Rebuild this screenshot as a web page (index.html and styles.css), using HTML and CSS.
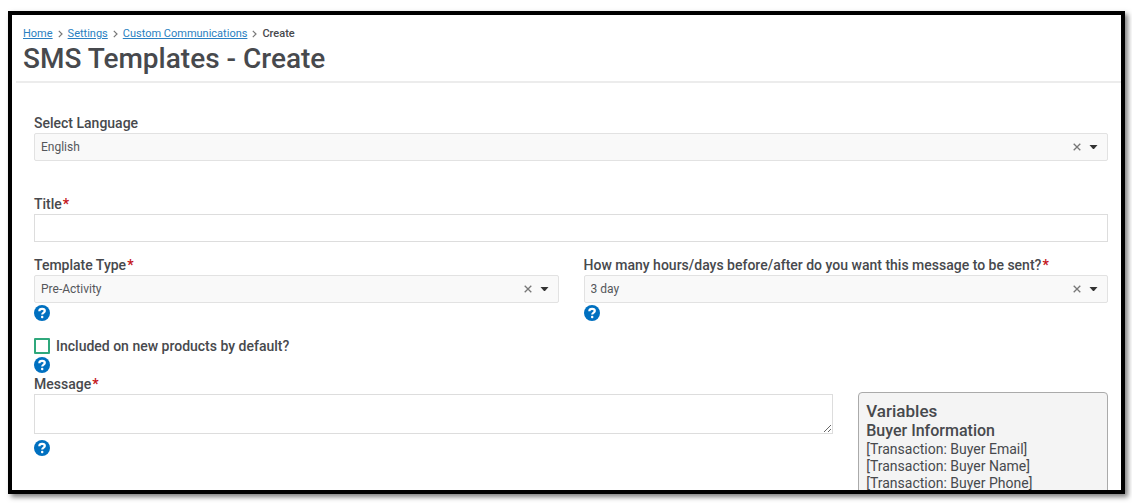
FILE: index.html
```
<!DOCTYPE html>
<html lang="en">
<head>
    <meta charset="UTF-8">
    <meta name="viewport" content="width=device-width, initial-scale=1.0">
    <title>SMS Templates - Create</title>
    <link rel="stylesheet" href="styles.css">
</head>
<body>
    <svg class="defs" aria-hidden="true">
        <symbol id="icon-help" viewBox="0 0 16 16">
            <circle cx="8" cy="8" r="8" fill="#0070c0"/>
            <path d="M5.300 6.200C5.400 4.600 6.500 3.900 8.100 3.900c1.600 0 2.700.8 2.700 2.100C10.800 7.600 8.200 7.600 8.200 9.600" fill="none" stroke="#fff" stroke-width="2.200"/>
            <rect x="7" y="10.800" width="2.400" height="2.400" rx="1" fill="#fff"/>
        </symbol>
        <symbol id="icon-clear" viewBox="0 0 8 8">
            <path d="M0.700 0.700L7.300 7.300M7.300 0.700L0.700 7.300" stroke="#777" stroke-width="1.300"/>
        </symbol>
        <symbol id="icon-caret" viewBox="0 0 8 4">
            <path d="M0 0H8L4.500 4H3.500Z" fill="#333"/>
        </symbol>
        <symbol id="icon-next" viewBox="0 0 5 8">
            <path d="M0.800 0.800L4 4L0.800 7.200" fill="none" stroke="#777" stroke-width="1.200"/>
        </symbol>
    </svg>
    <div class="frame">
        <header class="header">
            <nav class="breadcrumb" aria-label="Breadcrumb">
                <a href="#">Home</a>
                <svg><use href="#icon-next"/></svg>
                <a href="#">Settings</a>
                <svg><use href="#icon-next"/></svg>
                <a href="#">Custom Communications</a>
                <svg><use href="#icon-next"/></svg>
                <span class="current">Create</span>
            </nav>
            <h1>SMS Templates - Create</h1>
        </header>
        <form class="form">
            <div class="field language">
                <label for="language">Select Language</label>
                <div class="select">
                    <select id="language"><option>English</option></select>
                    <button type="button" class="clear" aria-label="Clear"><svg><use href="#icon-clear"/></svg></button>
                    <svg class="caret"><use href="#icon-caret"/></svg>
                </div>
            </div>
            <div class="field title">
                <label for="title">Title<span class="req">*</span></label>
                <input type="text" id="title" required>
            </div>
            <div class="row">
                <div class="field">
                    <label for="type">Template Type<span class="req">*</span></label>
                    <div class="select">
                        <select id="type"><option>Pre-Activity</option></select>
                        <button type="button" class="clear" aria-label="Clear"><svg><use href="#icon-clear"/></svg></button>
                        <svg class="caret"><use href="#icon-caret"/></svg>
                    </div>
                    <button type="button" class="help" aria-label="Help"><svg><use href="#icon-help"/></svg></button>
                </div>
                <div class="field">
                    <label for="when">How many hours/days before/after do you want this message to be sent?<span class="req">*</span></label>
                    <div class="select">
                        <select id="when"><option>3 day</option></select>
                        <button type="button" class="clear" aria-label="Clear"><svg><use href="#icon-clear"/></svg></button>
                        <svg class="caret"><use href="#icon-caret"/></svg>
                    </div>
                    <button type="button" class="help" aria-label="Help"><svg><use href="#icon-help"/></svg></button>
                </div>
            </div>
            <div class="check">
                <input type="checkbox" id="included">
                <label for="included">Included on new products by default?</label>
            </div>
            <button type="button" class="help" aria-label="Help"><svg><use href="#icon-help"/></svg></button>
            <div class="bottom">
                <div class="field message">
                    <label for="message">Message<span class="req">*</span></label>
                    <textarea id="message" required></textarea>
                    <button type="button" class="help" aria-label="Help"><svg><use href="#icon-help"/></svg></button>
                </div>
                <aside class="variables">
                    <h2>Variables</h2>
                    <h3>Buyer Information</h3>
                    <ul>
                        <li>[Transaction: Buyer Email]</li>
                        <li>[Transaction: Buyer Name]</li>
                        <li>[Transaction: Buyer Phone]</li>
                    </ul>
                </aside>
            </div>
        </form>
    </div>
</body>
</html>
```
FILE: styles.css
```
*{margin: 0; padding: 0; box-sizing: border-box;}
body{
    height: 100vh;
    padding: 11px 7px 9px 8px;
    overflow: hidden;
    background-color: #fff;
    color: #47494d;
    font-family: Roboto, "Liberation Sans", sans-serif;
    font-size: 14px;
}
li{list-style: none;}
button{
    border: none;
    background: none;
    cursor: pointer;
}
svg{display: block;}
.defs{
    position: absolute;
    width: 0;
    height: 0;
}
.frame{
    height: 100%;
    border: 4px solid #000;
    overflow: hidden;
    box-shadow: 3px 3px 5px rgba(0, 0, 0, 0.5);
}

/* header */
.header{
    margin-left: 4px;
    padding: 11px 7px 5px;
    border-bottom: 2px solid #ececec;
}
.breadcrumb{
    display: flex;
    align-items: center;
    gap: 5px;
    font-size: 11px;
    line-height: 16px;
}
.breadcrumb a{color: #2a7fc1;}
.breadcrumb svg{
    width: 5px;
    height: 8px;
}
.breadcrumb .current{font-weight: 500;}
h1{
    font-size: 28px;
    line-height: 34px;
    font-weight: 500;
}

/* form */
.form{padding: 31px 13px 0 22px;}
.field label{
    display: block;
    line-height: 18px;
    margin-bottom: 1px;
    font-weight: 500;
}
.req{
    margin-left: 1px;
    color: #c4161c;
    font-weight: 700;
}
.language{margin-bottom: 34px;}
.title{margin-bottom: 14px;}
.select{position: relative;}
select, input[type="text"], textarea{
    display: block;
    width: 100%;
    height: 28px;
    border: 1px solid #ddd;
    background-color: #fff;
    color: #55575b;
    font-family: inherit;
    font-size: 12px;
}
select{
    padding: 0 48px 0 6px;
    appearance: none;
    border-color: #e2e2e2;
    border-radius: 2px;
    background-color: #f9f9f9;
}
.clear{
    position: absolute;
    top: 10px;
    right: 27px;
}
.clear svg{
    width: 8px;
    height: 8px;
}
.caret{
    position: absolute;
    top: 12px;
    right: 10px;
    width: 9px;
    height: 4px;
    pointer-events: none;
}
.row{
    display: grid;
    grid-template-columns: 1fr 1fr;
    gap: 25px;
}
.help{
    display: block;
    margin-top: 2px;
}
.help svg{
    width: 16px;
    height: 16px;
}
.check{
    display: flex;
    align-items: center;
    gap: 6px;
    margin-top: 16px;
}
.check input{
    width: 16px;
    height: 16px;
    appearance: none;
    border: 2px solid #2fa87c;
    border-radius: 1px;
}
.check label{
    line-height: 18px;
    font-weight: 500;
}

/* message and variables */
.bottom{
    display: grid;
    grid-template-columns: 16fr 5fr;
    gap: 25px;
    margin-top: 2px;
}
textarea{
    height: 40px;
    padding: 4px 6px;
    resize: vertical;
}
.message .help{margin-top: 6px;}
.variables{
    margin-top: 17px;
    padding: 8px 7px;
    border: 1px solid #aaa;
    border-radius: 4px;
    background-color: #f4f4f4;
}
.variables h2{
    font-size: 17px;
    line-height: 20px;
    font-weight: 500;
}
.variables h3{
    font-size: 16px;
    line-height: 20px;
    font-weight: 500;
}
.variables li{line-height: 17px;}
```
